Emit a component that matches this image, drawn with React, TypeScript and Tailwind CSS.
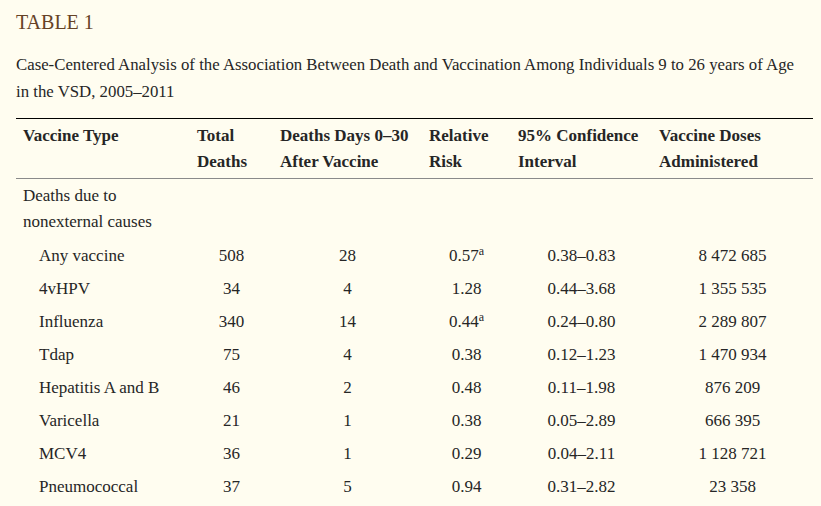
const rows = [
  { name: 'Any vaccine', total: '508', deaths: '28', risk: '0.57', sup: true, ci: '0.38–0.83', doses: '8 472 685' },
  { name: '4vHPV', total: '34', deaths: '4', risk: '1.28', sup: false, ci: '0.44–3.68', doses: '1 355 535' },
  { name: 'Influenza', total: '340', deaths: '14', risk: '0.44', sup: true, ci: '0.24–0.80', doses: '2 289 807' },
  { name: 'Tdap', total: '75', deaths: '4', risk: '0.38', sup: false, ci: '0.12–1.23', doses: '1 470 934' },
  { name: 'Hepatitis A and B', total: '46', deaths: '2', risk: '0.48', sup: false, ci: '0.11–1.98', doses: '876 209' },
  { name: 'Varicella', total: '21', deaths: '1', risk: '0.38', sup: false, ci: '0.05–2.89', doses: '666 395' },
  { name: 'MCV4', total: '36', deaths: '1', risk: '0.29', sup: false, ci: '0.04–2.11', doses: '1 128 721' },
  { name: 'Pneumococcal', total: '37', deaths: '5', risk: '0.94', sup: false, ci: '0.31–2.82', doses: '23 358' },
];

export default function App() {
  return (
    <div className="min-h-screen w-full bg-[#fffdf0] px-4 pt-2 font-['Liberation_Serif',serif] text-[#262626]">
      <h1 className="text-[20px] leading-[28px] text-[#654226]">TABLE 1</h1>
      <p className="mt-[15px] text-[16.8px] leading-[27px]">
        Case-Centered Analysis of the Association Between Death and Vaccination Among Individuals 9 to 26 years of Age
        <br />
        in the VSD, 2005–2011
      </p>
      <table className="mt-[13px] w-[797px] table-fixed border-collapse text-[17px] leading-[26px]">
        <colgroup>
          <col className="w-[174px]" />
          <col className="w-[83px]" />
          <col className="w-[149px]" />
          <col className="w-[89px]" />
          <col className="w-[141px]" />
          <col className="w-[161px]" />
        </colgroup>
        <thead>
          <tr className="border-t border-b border-t-black border-b-[#8a8a8a] text-left align-top font-bold">
            <th className="px-[7px] pt-[4px] pb-[3px]">Vaccine Type</th>
            <th className="px-[7px] pt-[4px] pb-[3px]">Total<br />Deaths</th>
            <th className="whitespace-nowrap px-[7px] pt-[4px] pb-[3px]">Deaths Days 0–30<br />After Vaccine</th>
            <th className="px-[7px] pt-[4px] pb-[3px]">Relative<br />Risk</th>
            <th className="whitespace-nowrap px-[7px] pt-[4px] pb-[3px]">95% Confidence<br />Interval</th>
            <th className="whitespace-nowrap px-[7px] pt-[4px] pb-[3px]">Vaccine Doses<br />Administered</th>
          </tr>
        </thead>
        <tbody>
          <tr>
            <td className="px-[7px] pt-[4px] pb-[3px]">Deaths due to<br />nonexternal causes</td>
            <td colSpan={5} />
          </tr>
          {rows.map((r) => (
            <tr key={r.name} className="h-[33px] text-center">
              <td className="whitespace-nowrap pt-[2px] pl-[23px] text-left">{r.name}</td>
              <td className="px-[7px] pt-[2px]">{r.total}</td>
              <td className="px-[7px] pt-[2px]">{r.deaths}</td>
              <td className="px-[7px] pt-[2px]">
                {r.risk}
                {r.sup && <sup className="text-[12px]">a</sup>}
              </td>
              <td className="px-[7px] pt-[2px]">{r.ci}</td>
              <td className="px-[7px] pt-[2px]">{r.doses}</td>
            </tr>
          ))}
        </tbody>
      </table>
    </div>
  );
}
